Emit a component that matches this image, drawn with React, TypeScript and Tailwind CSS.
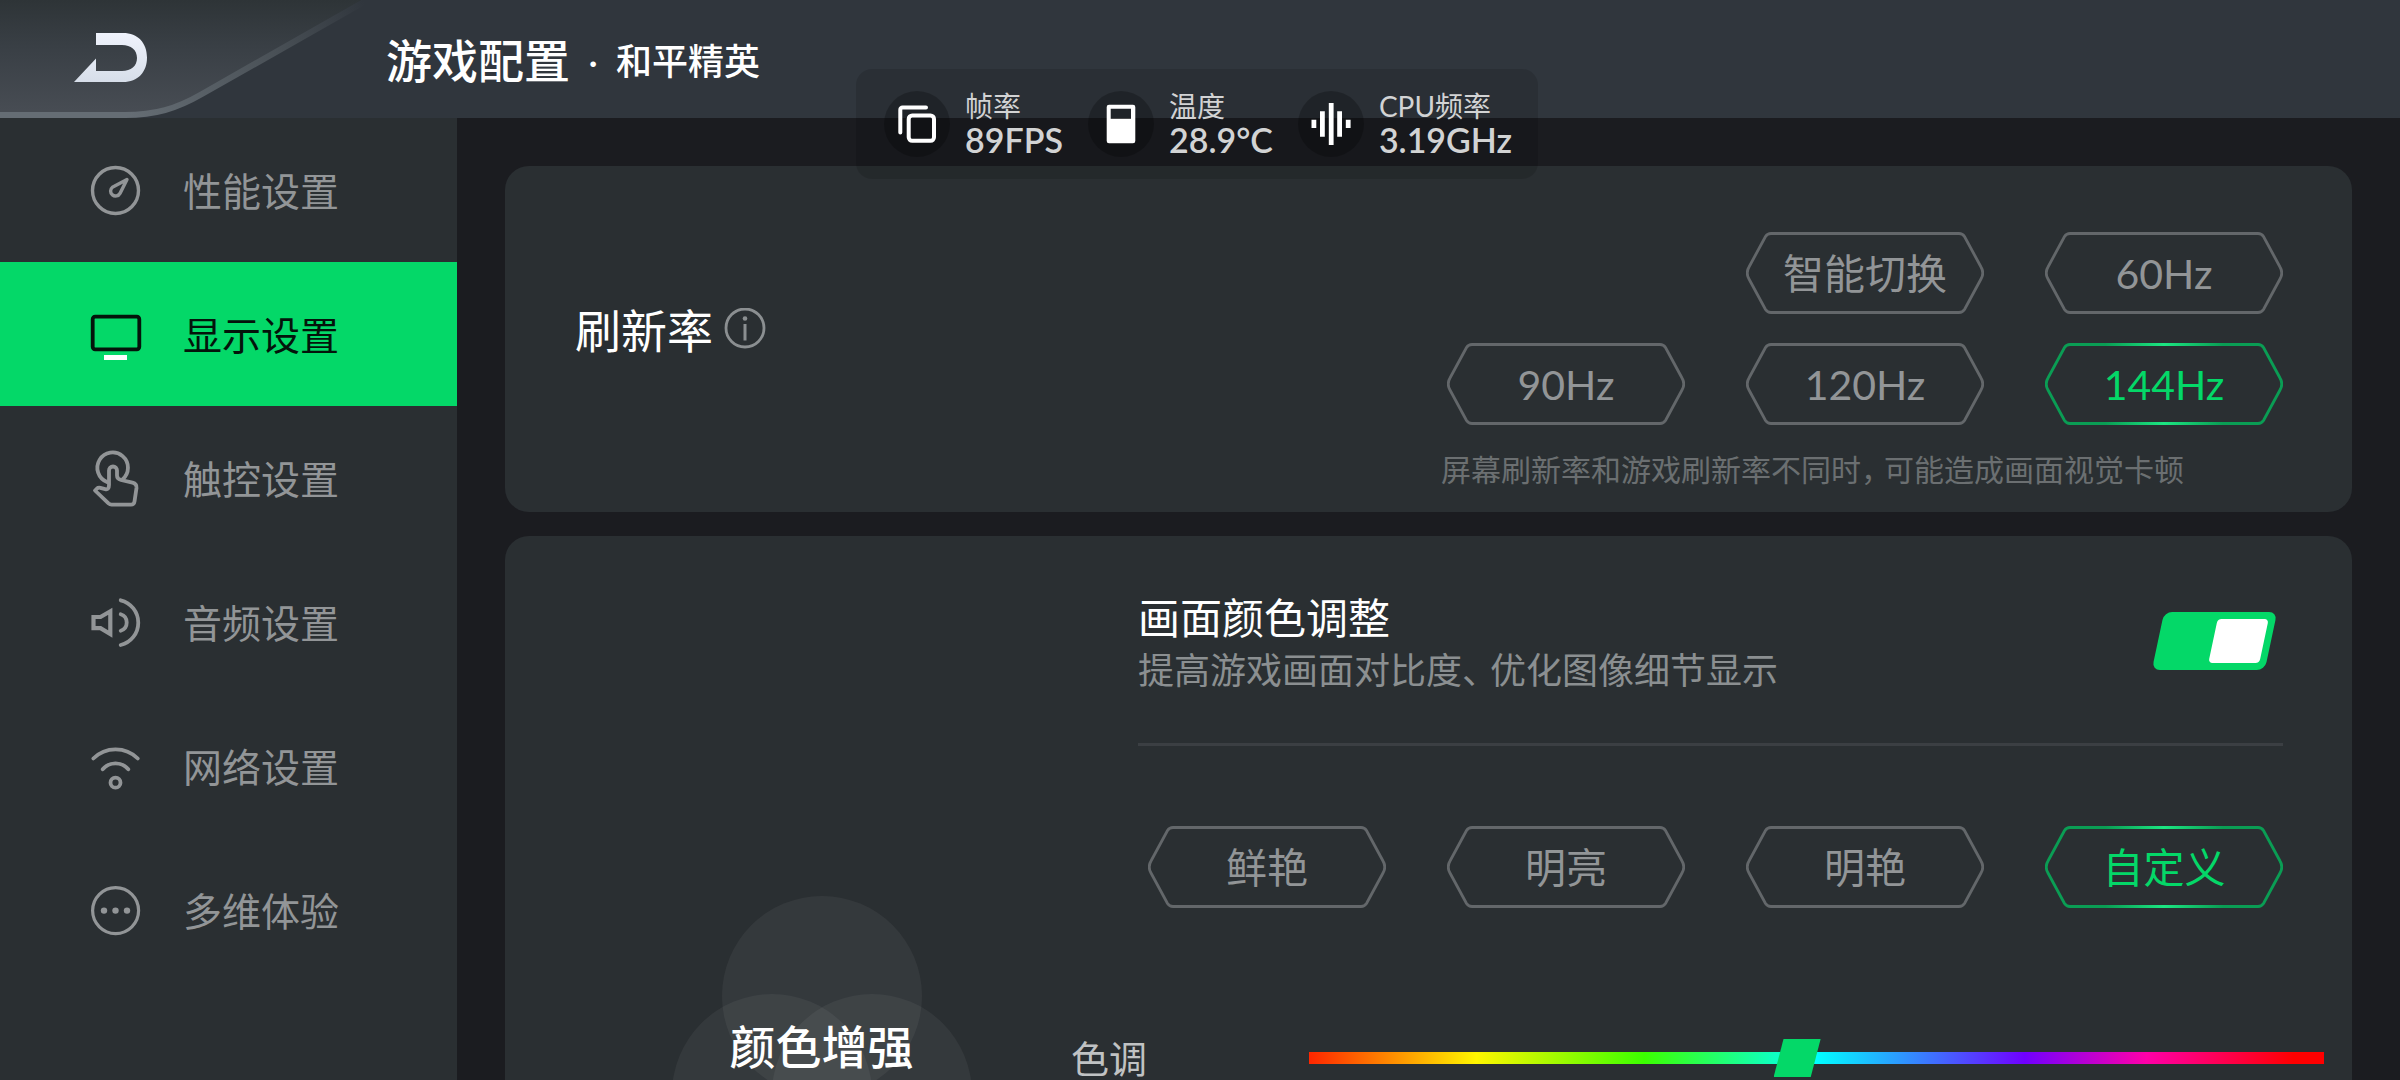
import { useState } from "react";
import type { ReactNode } from "react";
import clsx from "clsx";

const iconProps = {
  viewBox: "0 0 50 50",
  className: "size-[50px] shrink-0 overflow-visible",
  fill: "none",
  stroke: "currentColor",
  strokeWidth: 3.8,
  strokeLinecap: "round" as const,
  strokeLinejoin: "round" as const,
  "aria-hidden": true,
};

const GaugeIcon = () => (
  <svg {...iconProps} strokeWidth={3.4}>
    <circle cx="24.5" cy="25.5" r="23" />
    <path d="M36 14.5 21.4 22.2A5 5 0 1 0 29 28.4Z" />
  </svg>
);

const DisplayIcon = () => (
  <svg {...iconProps}>
    <rect x="1.7" y="7.7" width="46.6" height="32.6" rx="2.5" />
    <path d="M13 48.5H36" stroke="#fff" strokeWidth="5" strokeLinecap="butt" />
  </svg>
);

const TouchIcon = () => (
  <svg {...iconProps}>
    <path d="M16 29A15.3 15.3 0 1 1 31.5 26.5" />
    <path d="M18 32V17.5a4 4 0 0 1 8 0v5c0 2.5 1.5 3.8 4 4.5l11.5 2.7c3 .8 4.3 2.6 4 5.3l-2 13.5c-.3 2-1.3 3.2-3.5 3.2H20.5c-1.3 0-2-.4-3-1.3L4 37.5l2-2c1-.9 2-1 3.3-.7l5 1.4c2.4.6 3.7-.9 3.7-4.2Z" />
  </svg>
);

const AudioIcon = () => (
  <svg {...iconProps}>
    <path d="M2.5 20H9.5L19.3 14.3V37L9.5 31.2H2.5Z" strokeWidth="4.2" strokeLinejoin="miter" />
    <path d="M29.7 17.3A8.6 8.6 0 0 1 29.7 33.7" />
    <path d="M29.7 3.3A23 23 0 0 1 29.7 48" />
  </svg>
);

const NetworkIcon = () => (
  <svg {...iconProps}>
    <path d="M2.3 17.5A31.6 31.6 0 0 1 46.8 17.5" />
    <path d="M11.7 28.3A16.7 16.7 0 0 1 37.3 28.3" />
    <circle cx="24.5" cy="41.7" r="5" />
  </svg>
);

const MoreIcon = () => (
  <svg {...iconProps} strokeWidth={3.2}>
    <circle cx="24.6" cy="25.6" r="23" />
    <g fill="currentColor" stroke="none">
      <circle cx="13" cy="25.6" r="3.2" />
      <circle cx="24.5" cy="25.6" r="3.2" />
      <circle cx="36" cy="25.6" r="3.2" />
    </g>
  </svg>
);

const navItems = [
  { label: "性能设置", icon: <GaugeIcon /> },
  { label: "显示设置", icon: <DisplayIcon /> },
  { label: "触控设置", icon: <TouchIcon /> },
  { label: "音频设置", icon: <AudioIcon /> },
  { label: "网络设置", icon: <NetworkIcon /> },
  { label: "多维体验", icon: <MoreIcon /> },
];

const stats = [
  {
    label: "帧率",
    value: "89FPS",
    icon: (
      <g fill="none" stroke="#fff" strokeWidth="4" strokeLinecap="round">
        <rect x="24.7" y="24.5" width="25.3" height="25.3" rx="3.5" />
        <path d="M42 16.5H18.5a2.2 2.2 0 0 0-2.2 2.2V41.5" />
      </g>
    ),
  },
  {
    label: "温度",
    value: "28.9°C",
    icon: (
      <path
        fill="#fff"
        fillRule="evenodd"
        d="M21 13.7H45a2.3 2.3 0 0 1 2.3 2.3V50a2.3 2.3 0 0 1-2.3 2.3H21a2.3 2.3 0 0 1-2.3-2.3V16a2.3 2.3 0 0 1 2.3-2.3ZM22.7 17.7V27.7H43V17.7Z"
      />
    ),
  },
  {
    label: "CPU频率",
    value: "3.19GHz",
    icon: (
      <path
        stroke="#fff"
        strokeWidth="4.8"
        d="M33.2 12V54M24.4 20.3V45.7M41.6 20.3V45.7M15.9 28.7V37M50.2 28.7V37"
      />
    ),
  },
];

const rateRows = [
  ["智能切换", "60Hz"],
  ["90Hz", "120Hz", "144Hz"],
];
const colorModes = ["鲜艳", "明亮", "明艳", "自定义"];

const OptionButton = ({
  active,
  onClick,
  children,
}: {
  active: boolean;
  onClick: () => void;
  children: ReactNode;
}) => (
  <button
    type="button"
    aria-pressed={active}
    onClick={onClick}
    className={clsx(
      "relative flex h-[82px] w-[238px] items-center justify-center text-[41px] leading-none",
      active ? "text-[#04d868]" : "text-[#929597]",
    )}
  >
    <svg viewBox="0 0 238 82" className="absolute inset-0 size-full" fill="none" aria-hidden="true">
      <path
        d="M25 1.5H213Q216.5 1.5 218.5 4.5L235 35Q238.5 41 235 47L218.5 77.5Q216.5 80.5 213 80.5H25Q21.5 80.5 19.5 77.5L3 47Q-.5 41 3 35L19.5 4.5Q21.5 1.5 25 1.5Z"
        stroke={active ? "url(#activeEdge)" : "#63676a"}
        strokeWidth="2.8"
      />
    </svg>
    <span>{children}</span>
  </button>
);

const Header = () => (
  <header className="flex h-[118px] shrink-0 items-center bg-[#30363d] text-white">
    <button type="button" aria-label="返回" className="h-full w-[386px] shrink-0">
      <svg viewBox="0 0 386 118" className="h-full w-full">
        <defs>
          <linearGradient id="tab" x1="0" y1="0" x2="0" y2="1">
            <stop offset="0" stopColor="#2e3437" />
            <stop offset=".4" stopColor="#393f45" />
            <stop offset="1" stopColor="#484d54" />
          </linearGradient>
          <linearGradient id="tabEdge" gradientUnits="userSpaceOnUse" x1="130" y1="115" x2="365" y2="5">
            <stop offset="0" stopColor="#656d74" />
            <stop offset=".6" stopColor="#4a5157" />
            <stop offset="1" stopColor="#30363d" />
          </linearGradient>
          <linearGradient id="mark" x1="0" y1="0" x2="0" y2="1">
            <stop offset="0" stopColor="#eff3fc" />
            <stop offset="1" stopColor="#d7dee9" />
          </linearGradient>
        </defs>
        <path d="M0 0H372L202 94C176 109 155 115 125 115H0Z" fill="url(#tab)" />
        <path d="M0 115H125C155 115 176 109 202 94L378 -6" fill="none" stroke="url(#tabEdge)" strokeWidth="6" />
        <path
          d="M96 33H123C138 33 147 43 147 57.5S138 82 123 82H74L96 58.5V71H122C131 71 137 66 137 58S131 45 122 45H96Z"
          fill="url(#mark)"
        />
      </svg>
    </button>
    <h1 className="flex items-center pt-1 font-medium">
      <span className="text-[46px] leading-none">游戏配置</span>
      <span className="w-[46px] text-center text-[35px] leading-none">·</span>
      <span className="text-[36px] leading-none">和平精英</span>
    </h1>
  </header>
);

const Sidebar = () => (
  <nav className="w-[457px] shrink-0 bg-[#2a2f32]">
    {navItems.map((item, i) => (
      <a
        key={item.label}
        href="#"
        aria-current={i === 1 ? "page" : undefined}
        className={clsx(
          "flex h-36 items-center gap-[42px] pl-[91px] text-[39px] leading-none",
          i === 1 ? "bg-[#04d868] text-[#04140b]" : "text-[#929597]",
        )}
      >
        {item.icon}
        <span className="pt-0.5">{item.label}</span>
      </a>
    ))}
  </nav>
);

const StatsOverlay = () => (
  <aside className="absolute top-[69px] left-1/2 flex h-[110px] w-[682px] -translate-x-[344px] items-center gap-[25px] rounded-2xl bg-black/12 pl-7">
    {stats.map((s) => (
      <div key={s.label} className="flex items-center gap-[15px]">
        <svg viewBox="0 0 66 66" className="size-[66px] rounded-full bg-black/24" aria-hidden="true">
          {s.icon}
        </svg>
        <div className="text-[#d2d3d4]">
          <p className="text-[28px] leading-8">{s.label}</p>
          <p className="text-[34px] leading-9 font-semibold">{s.value}</p>
        </div>
      </div>
    ))}
  </aside>
);

const RefreshRateCard = () => {
  const [rate, setRate] = useState("144Hz");
  return (
    <section className="rounded-3xl bg-[#2a2f32] pt-[66px] pr-[69px] pb-[25px] pl-[70px]">
      <div className="flex items-center justify-between">
        <div className="flex items-center gap-[11px]">
          <h2 className="pt-1 text-[46px] leading-none text-white">刷新率</h2>
          <button type="button" aria-label="刷新率说明">
            <svg viewBox="0 0 42 42" className="size-[42px]" fill="none" stroke="#8b8f91" strokeWidth="2.8">
              <circle cx="21" cy="20" r="19" />
              <path d="M21 16V32.5" strokeWidth="3" />
              <circle cx="21" cy="10.5" r="2.3" fill="#8b8f91" stroke="none" />
            </svg>
          </button>
        </div>
        <div className="flex flex-col gap-[29px]">
          {rateRows.map((row) => (
            <div key={row[0]} className="flex justify-end gap-[61px]">
              {row.map((r) => (
                <OptionButton key={r} active={r === rate} onClick={() => setRate(r)}>
                  {r}
                </OptionButton>
              ))}
            </div>
          ))}
        </div>
      </div>
      <p className="mt-[26px] ml-auto w-[842px] text-3xl leading-9 text-[#6b6f71]">
        屏幕刷新率和游戏刷新率不同时<span className="mr-2 [font-feature-settings:'halt']">，</span>可能造成画面视觉卡顿
      </p>
    </section>
  );
};

const ColorCard = () => {
  const [enabled, setEnabled] = useState(true);
  const [mode, setMode] = useState("自定义");
  const [hue, setHue] = useState(48);
  return (
    <section className="flex min-h-[1018px] shrink-0 rounded-3xl bg-[#2a2f32]">
      <div className="flex w-[633px] shrink-0 items-center justify-center">
        <div className="relative flex size-[298px] items-center justify-center">
          <svg viewBox="0 0 298 298" className="absolute inset-0" fill="#fff" fillOpacity=".05" aria-hidden="true">
            <circle cx="149" cy="100" r="100" />
            <circle cx="99" cy="198" r="100" />
            <circle cx="199" cy="198" r="100" />
          </svg>
          <h2 className="relative pt-1 text-[46px] leading-none font-medium text-white">颜色增强</h2>
        </div>
      </div>
      <div className="flex-1 pt-[59px] pr-[69px]">
        <div className="flex items-start justify-between pr-3">
          <label htmlFor="color-adjust">
            <span className="block text-[42px] leading-[46px] text-white">画面颜色调整</span>
            <span className="mt-[6px] block text-4xl leading-[46px] text-[#8b8f91]">
              提高游戏画面对比度<span className="mr-2.5 [font-feature-settings:'halt']">、</span>优化图像细节显示
            </span>
          </label>
          <input
            id="color-adjust"
            type="checkbox"
            checked={enabled}
            onChange={(e) => setEnabled(e.target.checked)}
            className="mt-[17px] flex h-[58px] w-[113px] -skew-x-12 appearance-none items-center rounded-lg bg-[#5a5f63] pl-[6px] before:h-11 before:w-[51px] before:rounded-[4px] before:bg-white checked:bg-[#04d868] checked:pl-[55px]"
          />
        </div>
        <div className="mt-[50px] h-[3px] bg-[#3b3f43]" />
        <div className="mt-20 flex justify-end gap-[61px]">
          {colorModes.map((m) => (
            <OptionButton key={m} active={m === mode} onClick={() => setMode(m)}>
              {m}
            </OptionButton>
          ))}
        </div>
        <div className="mt-[130px] -mr-[41px] -ml-[67px] flex items-center">
          <label htmlFor="hue" className="w-[238px] shrink-0 text-[38px] leading-10 text-[#c0c2c3]">
            色调
          </label>
          <input
            id="hue"
            type="range"
            min={0}
            max={100}
            value={hue}
            onChange={(e) => setHue(Number(e.target.value))}
            className="h-3 min-w-0 flex-1 appearance-none bg-[linear-gradient(to_right,#ff2600,#fff600_16.5%,#3cff00_33%,#00ffff_50%,#7000ff_70.5%,#ff00a8_82.5%,#ff0000_97%)] [&::-webkit-slider-thumb]:h-[38px] [&::-webkit-slider-thumb]:w-[47px] [&::-webkit-slider-thumb]:appearance-none [&::-webkit-slider-thumb]:bg-[#04d868] [&::-webkit-slider-thumb]:[clip-path:polygon(21%_0,100%_0,79%_100%,0_100%)]"
          />
        </div>
      </div>
    </section>
  );
};

export default function App() {
  return (
    <div className="relative flex h-screen flex-col overflow-hidden bg-[#1b1c20] font-[Lato,'Noto_Sans_CJK_SC',sans-serif]">
      <svg className="absolute size-0" aria-hidden="true">
        <defs>
          <linearGradient id="activeEdge">
            <stop offset="0" stopColor="#0a9d54" />
            <stop offset=".25" stopColor="#0a9d54" />
            <stop offset=".5" stopColor="#1ce682" />
            <stop offset=".75" stopColor="#0a9d54" />
            <stop offset="1" stopColor="#0a9d54" />
          </linearGradient>
        </defs>
      </svg>
      <Header />
      <div className="flex min-h-0 flex-1">
        <Sidebar />
        <main className="flex min-w-0 flex-1 flex-col gap-6 overflow-hidden pt-12 pr-12 pl-12">
          <RefreshRateCard />
          <ColorCard />
        </main>
      </div>
      <StatsOverlay />
    </div>
  );
}
